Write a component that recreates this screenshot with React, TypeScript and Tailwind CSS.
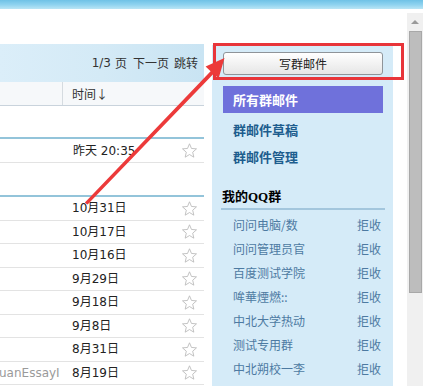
import React from "react";

const rows = [
  { date: "10月31日", sender: "" },
  { date: "10月17日", sender: "" },
  { date: "10月16日", sender: "" },
  { date: "9月29日", sender: "" },
  { date: "9月18日", sender: "" },
  { date: "9月8日", sender: "" },
  { date: "8月31日", sender: "" },
  { date: "8月19日", sender: "uanEssayI" },
];

const groups = [
  "问问电脑/数",
  "问问管理员官",
  "百度测试学院",
  "哞華煙燃::",
  "中北大学热动",
  "测试专用群",
  "中北朔校一李",
];

const cjk = { fontFamily: '"Noto Sans CJK SC", "Noto Sans", sans-serif' };
const num = { fontFamily: '"DejaVu Sans", "Noto Sans CJK SC", sans-serif' };

function Star() {
  return (
    <svg width="17" height="17" viewBox="0 0 24 24" className="shrink-0">
      <path
        d="M12 2.5l2.8 6.6 7.1.6-5.4 4.7 1.6 7-6.1-3.7-6.1 3.7 1.6-7-5.4-4.7 7.1-.6z"
        fill="none"
        stroke="#b8b8b8"
        strokeWidth="1.2"
        strokeLinejoin="round"
      />
    </svg>
  );
}

function MailRow({ date, sender }: { date: string; sender: string }) {
  return (
    <div className="flex h-[23.5px] items-center border-b border-[#e3e3e3]">
      <div className="w-[73px] overflow-hidden whitespace-nowrap text-[12px] text-[#9a9a9a] -ml-[1px]" style={num}>
        {sender}
      </div>
      <div className="flex-1 text-[12px] text-[#222]" style={num}>
        {date}
      </div>
      <div className="pr-[6px]">
        <Star />
      </div>
    </div>
  );
}

export default function App() {
  return (
    <div className="relative h-[386px] w-[423px] overflow-hidden bg-white" style={cjk}>
      <div className="h-[9px] bg-gradient-to-b from-[#6fc2e6] via-[#8dd2ef] to-[#b9e5f5]" />
      <div className="flex">
        <div className="flex w-[407px] pt-[35px]">
          {/* mail list */}
          <div className="w-[204px]">
            <div className="flex h-[38px] items-center justify-end bg-gradient-to-r from-[#dbeef9] via-[#d4eaf6] to-[#c9e4f3] pr-[6px] text-[12px] text-[#333]">
              <span style={num}>1/3</span>
              <span className="ml-[4px]">页</span>
              <span className="ml-[6px]">下一页</span>
              <span className="ml-[5px]">跳转</span>
            </div>
            <div className="flex h-[24px] items-center border-b border-[#c9d3dc] bg-[#f6f8fa]">
              <div className="h-full w-[63px] border-r border-[#d5dbe0]" />
              <div className="pl-[9px] text-[12px] text-[#333]">时间↓</div>
            </div>
            <div className="h-[31px]" />
            <div className="border-t-2 border-[#93c4da]">
              <div className="flex h-[24px] items-center border-b border-[#e3e3e3]">
                <div className="w-[73px]" />
                <div className="flex-1 text-[12px] text-[#222]" style={num}>
                  昨天 20:35
                </div>
                <div className="pr-[6px]">
                  <Star />
                </div>
              </div>
            </div>
            <div className="h-[32px]" />
            <div className="border-t-2 border-[#93c4da]">
              {rows.map((r) => (
                <MailRow key={r.date} date={r.date} sender={r.sender} />
              ))}
            </div>
          </div>

          {/* sidebar */}
          <div className="ml-[8px] mt-[1px] h-[400px] w-[181px] bg-[#d5ebf8] pl-[11px] pr-[10px]">
            <button className="mt-[7px] flex h-[23px] w-[160px] items-center justify-center rounded-[3px] border border-[#8f9499] bg-gradient-to-b from-[#ffffff] to-[#e6e6e6] text-[12px] text-[#222]">
              写群邮件
            </button>
            <div className="mt-[11px] flex h-[27px] w-[160px] items-center bg-[#6f71db] pl-[10px] text-[13px] font-bold text-white">
              所有群邮件
            </div>
            <div className="mt-[3px] flex h-[27px] items-center pl-[10px] text-[13px] font-bold text-[#1d5d8e]">
              群邮件草稿
            </div>
            <div className="flex h-[27px] items-center pl-[10px] text-[13px] font-bold text-[#1d5d8e]">
              群邮件管理
            </div>
            <div
              className="mt-[16px] flex h-[24px] w-[164px] -ml-[2px] items-center border-b-2 border-[#a3c6dd] pl-[1px] text-[13px] font-bold text-black"
              style={{ fontFamily: '"Liberation Serif", "Noto Sans CJK SC", serif' }}
            >
              我的QQ群
            </div>
            <div className="mt-[3px]">
              {groups.map((g) => (
                <div key={g} className="flex h-[24px] items-center justify-between pl-[10px] pr-[2px] text-[12px] text-[#4d7aa2]">
                  <span>{g}</span>
                  <span>拒收</span>
                </div>
              ))}
            </div>
          </div>
        </div>

        {/* scrollbar */}
        <div className="mt-[4px] flex h-[373px] w-[16px] flex-col items-center bg-[#f0f0f0]">
          <div className="flex h-[18px] w-full items-center justify-center">
            <div className="h-0 w-0 border-x-[4px] border-b-[4px] border-x-transparent border-b-[#9a9a9a]" />
          </div>
          <div className="h-[262px] w-[13px] border border-[#a8a8a8] bg-[#bdbdbd]" />
        </div>
      </div>

      {/* annotation */}
      <div className="absolute left-[213px] top-[43px] h-[37px] w-[191px] border-[3px] border-[#e8353a]" />
      <svg className="absolute left-0 top-0" width="423" height="386" viewBox="0 0 423 386">
        <polygon
          points="86.3,203.7 87.6,204.4 213.6,73.7 218.6,78.4 224.5,58 205.6,66.5 210.6,71.3 84.9,202.4"
          fill="#ec3a3a"
        />
      </svg>
    </div>
  );
}
